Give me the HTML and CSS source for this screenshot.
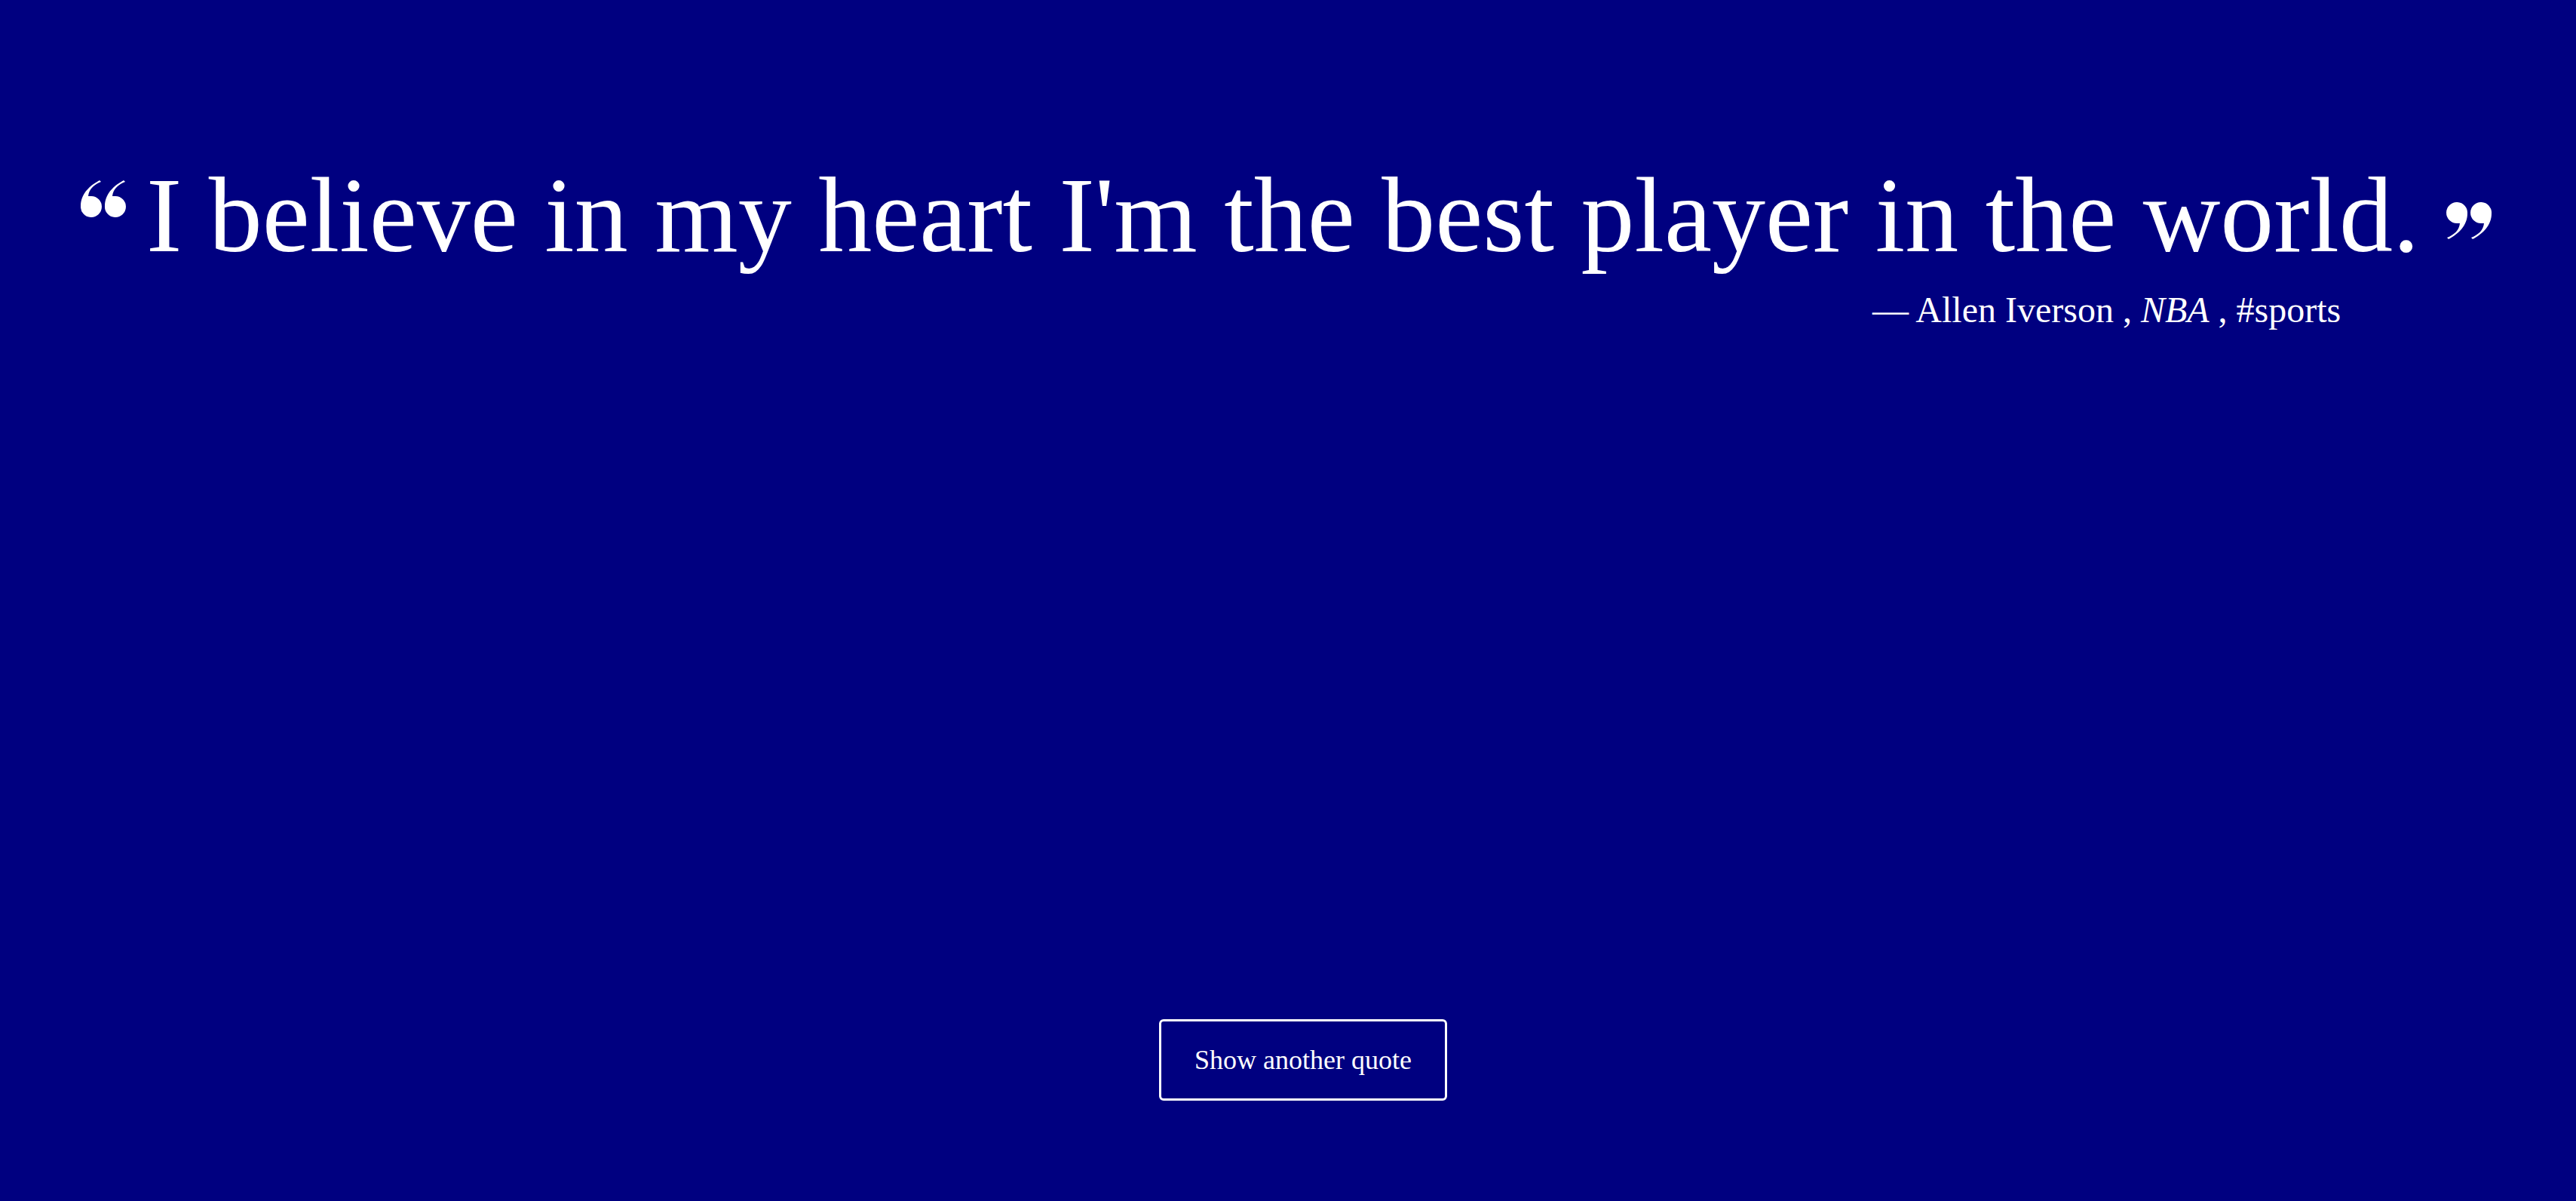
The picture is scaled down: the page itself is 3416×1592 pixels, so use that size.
FILE: index.html
```html
<!DOCTYPE html>
<html lang="en">
<head>
<meta charset="utf-8">
<title>Random Quote</title>
<link rel="stylesheet" href="styles.css">
</head>
<body>
<main class="page">
  <section class="quote-box">
    <blockquote class="quote">
      <svg class="qmark qmark-open" viewBox="0 0 60 50" aria-hidden="true">
        <path d="M25 1 C12 8 0 19 0 35 A14 14 0 1 0 14 22 C12 22 11 22 10 22 C11 13 17 7 27 3 Z"/>
        <path d="M57 1 C44 8 32 19 32 35 A14 14 0 1 0 46 22 C44 22 43 22 42 22 C43 13 49 7 59 3 Z"/>
      </svg>
      <p class="quote-text">I believe in my heart I'm the best player in the world.</p>
      <svg class="qmark qmark-close" viewBox="0 0 60 50" aria-hidden="true">
        <g transform="rotate(180 30 25)">
          <path d="M25 1 C12 8 0 19 0 35 A14 14 0 1 0 14 22 C12 22 11 22 10 22 C11 13 17 7 27 3 Z"/>
          <path d="M57 1 C44 8 32 19 32 35 A14 14 0 1 0 46 22 C44 22 43 22 42 22 C43 13 49 7 59 3 Z"/>
        </g>
      </svg>
    </blockquote>
    <p class="author">— Allen Iverson , <em>NBA</em> , #sports</p>
  </section>
  <div class="actions">
    <button class="next-btn" type="button">Show another quote</button>
  </div>
</main>
</body>
</html>
```
FILE: styles.css
```css
html, body {
  margin: 0;
  padding: 0;
  background: #000080;
}

body {
  color: #ffffff;
  font-family: "Liberation Serif", "Times New Roman", serif;
}

.page {
  height: 1592px;
  box-sizing: border-box;
  display: flex;
  flex-direction: column;
  justify-content: space-between;
  padding: 214px 0 133px;
}

.quote-box {
  display: flex;
  flex-direction: column;
}

.quote {
  margin: 0;
  padding-left: 107px;
  display: flex;
  align-items: flex-start;
}

.qmark {
  width: 60px;
  height: 50px;
  fill: #ffffff;
  flex: none;
}

.qmark-open {
  margin-top: 24px;
  margin-right: 27px;
}

.qmark-close {
  margin-top: 54px;
  margin-left: 35px;
}

.quote-text {
  margin: 0;
  font-size: 142px;
  line-height: 142px;
  white-space: nowrap;
}

.author {
  margin: 31px 0 0;
  padding-left: 2483px;
  font-size: 48px;
  line-height: 48px;
  white-space: nowrap;
}

.author em {
  font-style: italic;
}

.actions {
  display: flex;
  justify-content: center;
  padding-left: 40px;
}

.next-btn {
  width: 382px;
  height: 108px;
  box-sizing: border-box;
  background: transparent;
  color: #ffffff;
  border: 3px solid #ffffff;
  border-radius: 6px;
  font-family: "Liberation Serif", "Times New Roman", serif;
  font-size: 36px;
  line-height: 36px;
  padding: 0;
  cursor: pointer;
}
```
